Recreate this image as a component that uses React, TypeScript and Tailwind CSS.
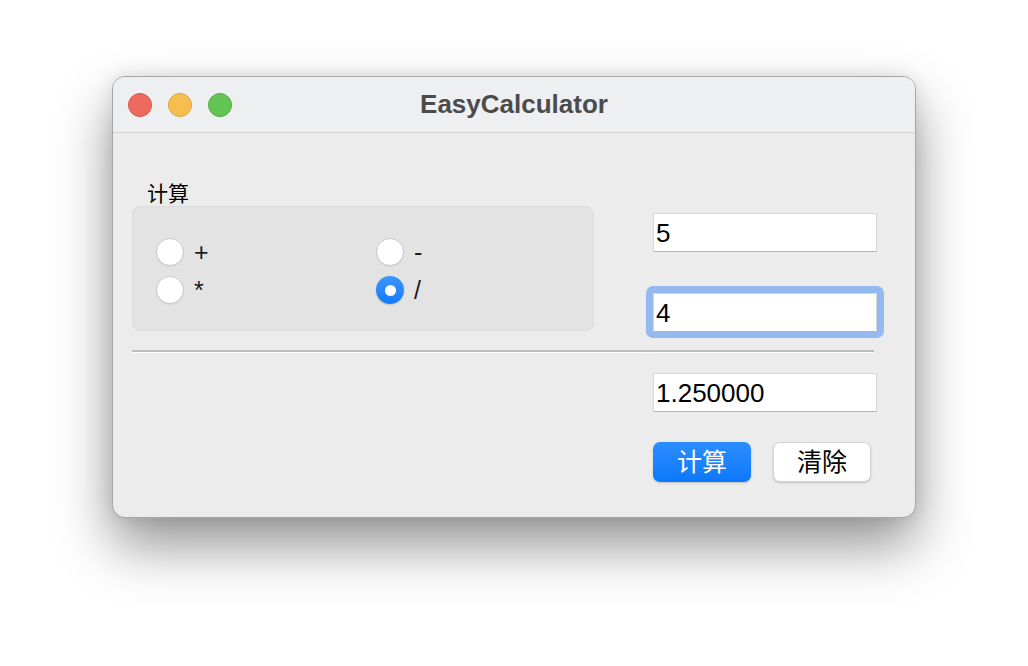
import { useState } from 'react';

const FONT = '"Liberation Sans", "Noto Sans CJK SC", sans-serif';

type Op = '+' | '-' | '*' | '/';

function Radio({ checked, label, onSelect }: { checked: boolean; label: string; onSelect: () => void }) {
  return (
    <button type="button" onClick={onSelect} className="flex h-[28px] items-center gap-[10px]">
      {checked ? (
        <span className="flex h-[28px] w-[28px] items-center justify-center rounded-full bg-gradient-to-b from-[#3a95ff] to-[#0f7cfb] shadow-[0_1px_2px_rgba(0,0,0,0.15)]">
          <span className="h-[11px] w-[11px] rounded-full bg-white" />
        </span>
      ) : (
        <span className="h-[28px] w-[28px] rounded-full border border-[#c9c9c9] bg-white shadow-[0_1px_1px_rgba(0,0,0,0.06)]" />
      )}
      <span className="text-[25px] leading-none text-[#1d1d1d]">{label}</span>
    </button>
  );
}

function Field({ value, onChange }: { value: string; onChange: (v: string) => void }) {
  return (
    <input
      value={value}
      onChange={(e) => onChange(e.target.value)}
      className="h-[39px] w-[224px] border border-[#d6d6d6] border-b-[#b4b4b4] bg-white px-[2px] pt-[2px] text-[26px] text-black outline-none"
      style={{ fontFamily: FONT }}
    />
  );
}

export default function App() {
  const [op, setOp] = useState<Op>('/');
  const [a, setA] = useState('5');
  const [b, setB] = useState('4');
  const [result, setResult] = useState('1.250000');

  const calc = () => {
    const x = parseFloat(a);
    const y = parseFloat(b);
    if (isNaN(x) || isNaN(y)) return;
    let r = 0;
    if (op === '+') r = x + y;
    else if (op === '-') r = x - y;
    else if (op === '*') r = x * y;
    else r = x / y;
    setResult(r.toFixed(6));
  };

  const clear = () => {
    setA('');
    setB('');
    setResult('');
  };

  return (
    <div className="h-[666px] w-[1028px] overflow-hidden bg-white pl-[112px] pt-[76px]" style={{ fontFamily: FONT }}>
      <div className="flex h-[442px] w-[804px] flex-col overflow-hidden rounded-[13px] border border-[#a6a6a6] bg-[#ececec] shadow-[0_28px_55px_rgba(0,0,0,0.42),0_0_18px_rgba(0,0,0,0.1)]">
        {/* Title bar */}
        <div className="relative flex h-[56px] shrink-0 items-center border-b border-[#d2d2d2] bg-[#eeeff1]">
          <div className="flex items-center gap-[16px] pl-[15px]">
            <span className="h-[24px] w-[24px] rounded-full border border-[#d9524a] bg-[#ee6a5f]" />
            <span className="h-[24px] w-[24px] rounded-full border border-[#d9a53c] bg-[#f5be4f]" />
            <span className="h-[24px] w-[24px] rounded-full border border-[#4ead3f] bg-[#62c554]" />
          </div>
          <div className="absolute inset-0 flex items-center justify-center pointer-events-none">
            <span className="text-[26px] font-bold text-[#4b4b4b]">EasyCalculator</span>
          </div>
        </div>

        {/* Body */}
        <div className="flex flex-col pl-[19px] pt-[47px]">
          <div className="flex">
            <div className="flex w-[462px] flex-col">
              <span className="pl-[15px] text-[21px] leading-[28px] text-black">计算</span>
              <div className="mt-[-2px] h-[125px] rounded-[8px] border border-[#dadada] bg-[#e3e3e3] pl-[23px] pt-[31px]">
                <div className="grid w-[300px] grid-cols-[220px_1fr] gap-y-[10px]">
                  <Radio checked={op === '+'} label="+" onSelect={() => setOp('+')} />
                  <Radio checked={op === '-'} label="-" onSelect={() => setOp('-')} />
                  <Radio checked={op === '*'} label="*" onSelect={() => setOp('*')} />
                  <Radio checked={op === '/'} label="/" onSelect={() => setOp('/')} />
                </div>
              </div>
            </div>
            <div className="ml-[59px] flex flex-col pt-[33px]">
              <Field value={a} onChange={setA} />
              <div className="ml-[-7px] mt-[34px] rounded-[7px] bg-[#93b9ee] px-[7px] pb-[6px] pt-[7px]">
                <Field value={b} onChange={setB} />
              </div>
            </div>
          </div>

          <div className="mt-[12px] h-[3px] w-[742px] border-b border-white bg-[#bdbdbd]" />

          <div className="ml-[521px] mt-[20px] flex flex-col">
            <Field value={result} onChange={setResult} />
            <div className="mt-[30px] flex gap-[22px]">
              <button
                type="button"
                onClick={calc}
                className="h-[40px] w-[98px] rounded-[7px] bg-gradient-to-b from-[#2c8dff] to-[#0a78fa] text-[25px] leading-none text-white shadow-[0_1px_2px_rgba(0,0,0,0.2)]"
              >
                计算
              </button>
              <button
                type="button"
                onClick={clear}
                className="h-[40px] w-[98px] rounded-[7px] border border-[#d4d4d4] bg-white text-[25px] leading-none text-black shadow-[0_1px_2px_rgba(0,0,0,0.18)]"
              >
                清除
              </button>
            </div>
          </div>
        </div>
      </div>
    </div>
  );
}
